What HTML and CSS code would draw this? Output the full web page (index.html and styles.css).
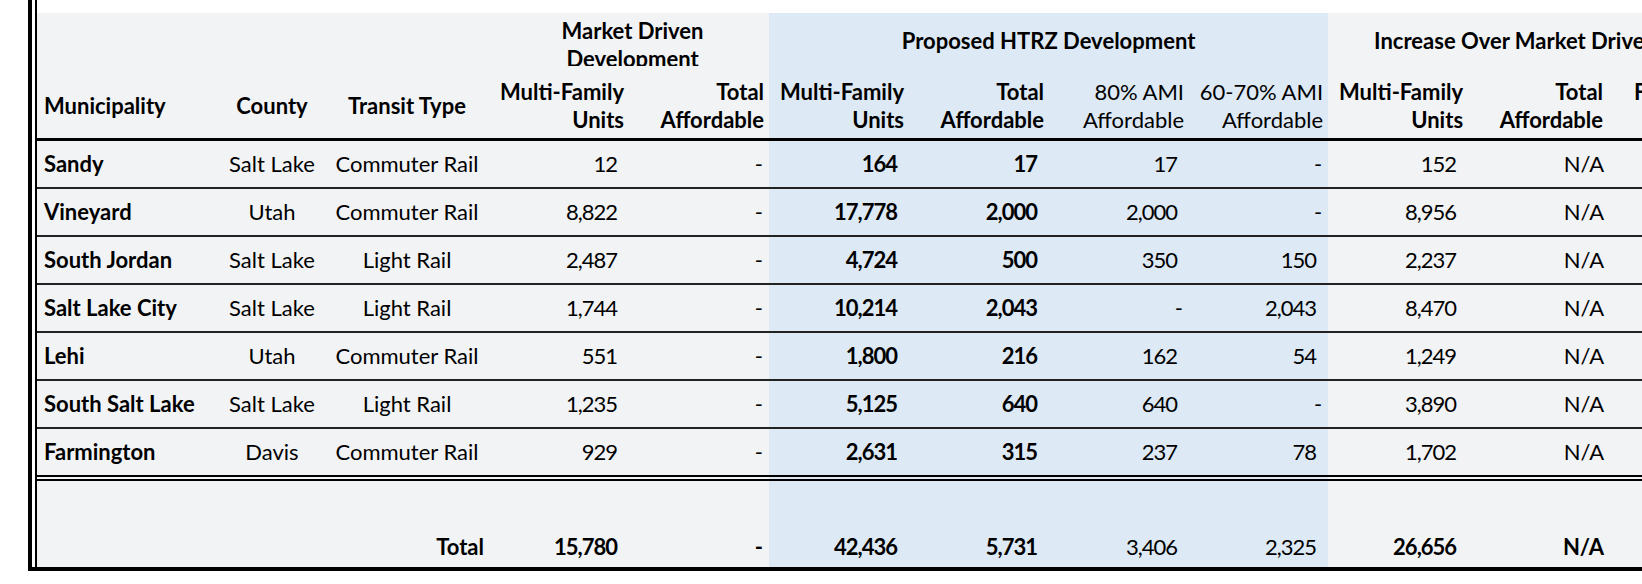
FILE: index.html
```html
<!DOCTYPE html>
<html lang="en">
<head>
<meta charset="utf-8">
<title>HTRZ Development Comparison</title>
<link rel="stylesheet" href="styles.css">
</head>
<body>
<div class="frame">
  <div class="inner">
    <table class="grid">
      <colgroup>
        <col class="w-muni"><col class="w-county"><col class="w-transit">
        <col class="w-num"><col class="w-num">
        <col class="w-num"><col class="w-num"><col class="w-num"><col class="w-num9">
        <col class="w-num"><col class="w-num"><col class="w-num">
      </colgroup>
      <thead>
        <tr class="group-row">
          <th colspan="3"></th>
          <th colspan="2" class="grp grp-market"><div class="clip">Market Driven<br>Development</div></th>
          <th colspan="4" class="grp grp-prop blue"><div class="grp-label">Proposed HTRZ Development</div></th>
          <th colspan="3" class="grp grp-inc"><div class="grp-label">Increase Over Market Driven Development</div></th>
        </tr>
        <tr class="sub-row">
          <th class="left">Municipality</th>
          <th class="center">County</th>
          <th class="center transit">Transit Type</th>
          <th class="right">Multi-Family<br>Units</th>
          <th class="right">Total<br>Affordable</th>
          <th class="right blue">Multi-Family<br>Units</th>
          <th class="right blue">Total<br>Affordable</th>
          <th class="right blue light">80% AMI<br>Affordable</th>
          <th class="right blue light">60-70% AMI<br>Affordable</th>
          <th class="right">Multi-Family<br>Units</th>
          <th class="right">Total<br>Affordable</th>
          <th class="last-h"><div class="l1">Fold Increase</div><div class="l2">Units</div></th>
        </tr>
      </thead>
      <tbody>
        <tr>
          <td class="left b">Sandy</td><td class="center">Salt Lake</td><td class="center transit">Commuter Rail</td>
          <td class="num">12</td><td class="dash">-</td>
          <td class="num blue b">164</td><td class="num blue b">17</td><td class="num blue">17</td><td class="dash blue">-</td>
          <td class="num">152</td><td class="na">N/A</td><td class="num"></td>
        </tr>
        <tr>
          <td class="left b">Vineyard</td><td class="center">Utah</td><td class="center transit">Commuter Rail</td>
          <td class="num">8,822</td><td class="dash">-</td>
          <td class="num blue b">17,778</td><td class="num blue b">2,000</td><td class="num blue">2,000</td><td class="dash blue">-</td>
          <td class="num">8,956</td><td class="na">N/A</td><td class="num"></td>
        </tr>
        <tr>
          <td class="left b">South Jordan</td><td class="center">Salt Lake</td><td class="center transit">Light Rail</td>
          <td class="num">2,487</td><td class="dash">-</td>
          <td class="num blue b">4,724</td><td class="num blue b">500</td><td class="num blue">350</td><td class="num blue">150</td>
          <td class="num">2,237</td><td class="na">N/A</td><td class="num"></td>
        </tr>
        <tr>
          <td class="left b">Salt Lake City</td><td class="center">Salt Lake</td><td class="center transit">Light Rail</td>
          <td class="num">1,744</td><td class="dash">-</td>
          <td class="num blue b">10,214</td><td class="num blue b">2,043</td><td class="dash blue">-</td><td class="num blue">2,043</td>
          <td class="num">8,470</td><td class="na">N/A</td><td class="num"></td>
        </tr>
        <tr>
          <td class="left b">Lehi</td><td class="center">Utah</td><td class="center transit">Commuter Rail</td>
          <td class="num">551</td><td class="dash">-</td>
          <td class="num blue b">1,800</td><td class="num blue b">216</td><td class="num blue">162</td><td class="num blue">54</td>
          <td class="num">1,249</td><td class="na">N/A</td><td class="num"></td>
        </tr>
        <tr>
          <td class="left b">South Salt Lake</td><td class="center">Salt Lake</td><td class="center transit">Light Rail</td>
          <td class="num">1,235</td><td class="dash">-</td>
          <td class="num blue b">5,125</td><td class="num blue b">640</td><td class="num blue">640</td><td class="dash blue">-</td>
          <td class="num">3,890</td><td class="na">N/A</td><td class="num"></td>
        </tr>
        <tr class="last-row">
          <td class="left b">Farmington</td><td class="center">Davis</td><td class="center transit">Commuter Rail</td>
          <td class="num">929</td><td class="dash">-</td>
          <td class="num blue b">2,631</td><td class="num blue b">315</td><td class="num blue">237</td><td class="num blue">78</td>
          <td class="num">1,702</td><td class="na">N/A</td><td class="num"></td>
        </tr>
      </tbody>
      <tfoot>
        <tr class="total-row">
          <td></td><td></td><td class="right b total-label">Total</td>
          <td class="num b">15,780</td><td class="dash b">-</td>
          <td class="num blue b">42,436</td><td class="num blue b">5,731</td><td class="num blue">3,406</td><td class="num blue">2,325</td>
          <td class="num b">26,656</td><td class="na b">N/A</td><td class="num"></td>
        </tr>
      </tfoot>
    </table>
  </div>
</div>
</body>
</html>
```

FILE: styles.css
```css
html, body {
  margin: 0;
  padding: 0;
  background: #ffffff;
  overflow: hidden;
}

body {
  width: 1642px;
  height: 584px;
  font-family: Lato, "Open Sans", "Liberation Sans", sans-serif;
  font-size: 22px;
  color: #000;
}

.frame {
  margin-left: 28px;
  width: 1780px;
  border-left: 4px solid #000;
  border-bottom: 4px solid #000;
  padding-left: 3px;
  background: #fff;
}

.inner {
  border-left: 2px solid #000;
  padding-top: 13px;
  background: #fff;
}

.grid {
  border-collapse: separate;
  border-spacing: 0;
  table-layout: fixed;
  width: 1711px;
  background: #f2f3f5;
  line-height: 28px;
}

.w-muni { width: 174px; }
.w-county { width: 122px; }
.w-transit { width: 156px; }
.w-num { width: 140px; }
.w-num9 { width: 139px; }

th, td {
  padding: 0 5px;
  white-space: nowrap;
  overflow: hidden;
}

th { font-weight: 700; }
th.light { font-weight: 400; }

.blue { background: #dde9f4; }

.left { text-align: left; }
.center { text-align: center; }
.right { text-align: right; }
.transit { padding-right: 9px; padding-left: 1px; }
.b { font-weight: 700; }

/* group header row */
.group-row th {
  height: 53px;
  padding-top: 0;
  padding-bottom: 0;
  vertical-align: top;
}
.grp-market { text-align: center; padding-left: 7px; padding-right: 0; }
.grp-market .clip {
  margin-top: 4px;
  height: 49px;
  overflow: hidden;
}
.grp-label {
  padding-top: 14px;
}
.grp-prop { text-align: center; }
.group-row th.grp-inc {
  text-align: left;
  padding-left: 46px;
}

/* sub header row */
.sub-row th {
  height: 56px;
  padding-top: 12px;
  padding-bottom: 4px;
  vertical-align: middle;
  border-bottom: 3px solid #000;
}
.sub-row th.left { padding-left: 7px; }
.sub-row th.last-h { padding-left: 26px; }
.last-h .l1 { text-align: left; }
.last-h .l2 { text-align: right; }

/* body rows */
tbody td {
  height: 46px;
  padding-top: 0;
  padding-bottom: 0;
  vertical-align: middle;
  border-bottom: 2px solid #222;
}
tbody td.left { padding-left: 7px; }
tbody tr.last-row td {
  border-bottom: 6px double #000;
}

td.num { text-align: right; padding-right: 12px; letter-spacing: -1px; }
td.dash { text-align: right; padding-right: 6px; }
td.na { text-align: right; padding-right: 4px; }

/* total row */
.total-row td {
  height: 80px;
  padding-top: 0;
  padding-bottom: 6px;
  vertical-align: bottom;
}
```
